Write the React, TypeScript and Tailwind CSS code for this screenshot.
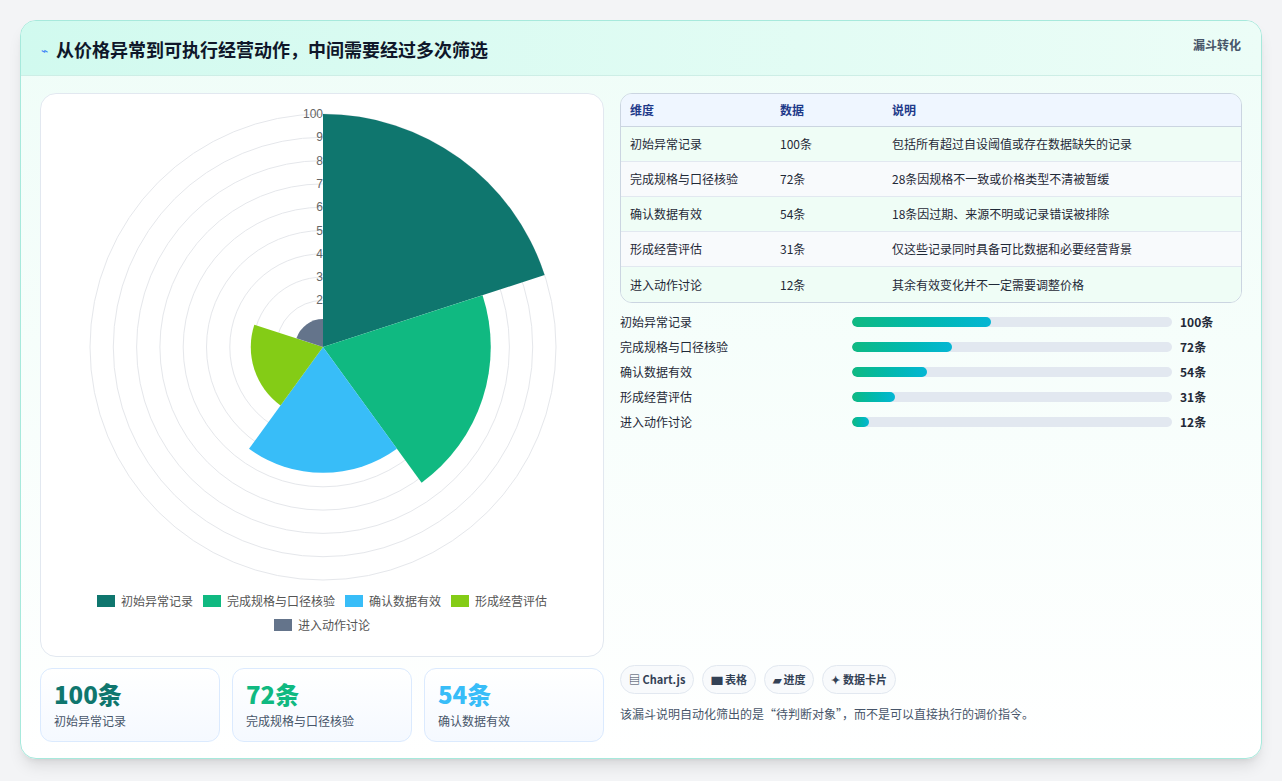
import React from "react";

const rows = [
  ["初始异常记录", "100条", "包括所有超过自设阈值或存在数据缺失的记录", 100],
  ["完成规格与口径核验", "72条", "28条因规格不一致或价格类型不清被暂缓", 72],
  ["确认数据有效", "54条", "18条因过期、来源不明或记录错误被排除", 54],
  ["形成经营评估", "31条", "仅这些记录同时具备可比数据和必要经营背景", 31],
  ["进入动作讨论", "12条", "其余有效变化并不一定需要调整价格", 12],
] as const;
const colors = ["#0f766e", "#10b981", "#38bdf8", "#84cc16", "#64748b"];

function Polar() {
  const cx = 282, cy = 253, k = 2.33;
  const pt = (r: number, deg: number) => {
    const a = (deg * Math.PI) / 180;
    return `${(cx + r * Math.cos(a)).toFixed(2)} ${(cy + r * Math.sin(a)).toFixed(2)}`;
  };
  return (
    <svg width="563" height="500" viewBox="0 0 563 500">
      {[10, 9, 8, 7, 6, 5, 4, 3, 2, 1].map((t) => (
        <circle key={t} cx={cx} cy={cy} r={t * 10 * k} fill="none" stroke="#e5e7eb" strokeWidth="1" />
      ))}
      {rows.map((r, i) => {
        const rad = (r[3] as number) * k;
        const s = -90 + 72 * i, e = s + 72;
        return <path key={i} d={`M${cx} ${cy} L${pt(rad, s)} A${rad} ${rad} 0 0 1 ${pt(rad, e)} Z`} fill={colors[i]} />;
      })}
      {[100, 90, 80, 70, 60, 50, 40, 30, 20].map((t) => (
        <text key={t} x={cx} y={cy - t * k + 4} textAnchor="end" fontSize="12" fill="#666" fontFamily="Liberation Sans, sans-serif">
          {String(t).slice(0, t === 100 ? 3 : 1)}
        </text>
      ))}
    </svg>
  );
}

export default function App() {
  return (
    <div className="w-[1282px] h-[781px] bg-[#f3f4f6] p-5 pb-[22px]" style={{ fontFamily: "'Noto Sans CJK SC', 'Noto Sans', sans-serif" }}>
      <div className="h-full rounded-2xl border border-[#a7e9dc] bg-gradient-to-b from-[#effdf8] to-white shadow-lg overflow-hidden flex flex-col">
        <div className="h-[55px] flex items-start justify-between px-5 bg-gradient-to-r from-[#d1faef] to-[#ecfdf7] border-b border-[#cdeee6]">
          <div className="flex items-center gap-2 mt-[15px]">
            <span className="text-[#3b82f6] text-xs">⌁</span>
            <span className="text-[18px] font-bold text-[#0f172a]">从价格异常到可执行经营动作，中间需要经过多次筛选</span>
          </div>
          <span className="text-[12px] font-bold text-[#475569] mt-[15px]">漏斗转化</span>
        </div>
        <div className="flex gap-4 px-[19px] pt-[17px]">
          <div className="w-[564px] flex flex-col gap-[11px]">
            <div className="h-[564px] rounded-2xl border border-[#e2e8f0] bg-white flex flex-col items-center">
              <Polar />
              <div className="flex flex-wrap justify-center gap-x-[10px] gap-y-[6px] w-[480px] text-[12px] text-[#555] -mt-[2px]">
                {rows.map((r, i) => (
                  <span key={i} className="flex items-center gap-[6px]">
                    <span className="w-[18px] h-[12px]" style={{ background: colors[i] }} />
                    {r[0]}
                  </span>
                ))}
              </div>
            </div>
            <div className="flex gap-3">
              {[0, 1, 2].map((i) => (
                <div key={i} className="flex-1 h-[74px] rounded-xl border border-[#dbeafe] bg-gradient-to-b from-white to-[#f5f9ff] px-[13px] pt-[9px]">
                  <div className="text-[24px] font-extrabold leading-[32px]" style={{ color: colors[i === 2 ? 2 : i] }}>{rows[i][1]}</div>
                  <div className="text-[12px] text-[#475569] mt-[2px]">{rows[i][0]}</div>
                </div>
              ))}
            </div>
          </div>
          <div className="flex-1 flex flex-col">
            <div className="rounded-xl border border-[#cbd5e1] overflow-hidden text-[12px] text-[#1f2937]">
              <div className="flex h-[33px] items-center bg-[#eff6ff] border-b border-[#cbd5e1] font-bold text-[#1e3a8a]">
                <span className="w-[159px] pl-[9px]">维度</span>
                <span className="w-[112px]">数据</span>
                <span>说明</span>
              </div>
              {rows.map((r, i) => (
                <div key={i} className={`flex h-[35px] items-center ${i < 4 ? "border-b border-[#e2e8f0]" : ""} ${i % 2 ? "bg-[#f8fafc]" : "bg-[#effdf6]"}`}>
                  <span className="w-[159px] pl-[9px]">{r[0]}</span>
                  <span className="w-[112px]">{r[1]}</span>
                  <span>{r[2]}</span>
                </div>
              ))}
            </div>
            <div className="flex flex-col gap-[9px] mt-[11px] text-[12px] text-[#1f2937]">
              {rows.map((r, i) => (
                <div key={i} className="flex items-center h-[16px]">
                  <span className="w-[232px]">{r[0]}</span>
                  <div className="w-[320px] h-[10px] rounded-full bg-[#e2e8f0] overflow-hidden">
                    <div className="h-full rounded-full bg-gradient-to-r from-[#10b981] to-[#06b6d4]" style={{ width: `${(r[3] as number) * 1.39}px` }} />
                  </div>
                  <span className="ml-2 font-bold">{r[1]}</span>
                </div>
              ))}
            </div>
            <div className="mt-auto flex gap-2 text-[11px] font-bold text-[#334155]">
              {["▤ Chart.js", "▆ 表格", "▰ 进度", "✦ 数据卡片"].map((t) => (
                <span key={t} className="h-[29px] px-[8px] flex items-center rounded-full border border-[#e2e8f0] bg-[#f8fafc]">{t}</span>
              ))}
            </div>
            <div className="mt-[11px] mb-[19px] text-[12px] text-[#475569]">该漏斗说明自动化筛出的是“待判断对象”，而不是可以直接执行的调价指令。</div>
          </div>
        </div>
      </div>
    </div>
  );
}
